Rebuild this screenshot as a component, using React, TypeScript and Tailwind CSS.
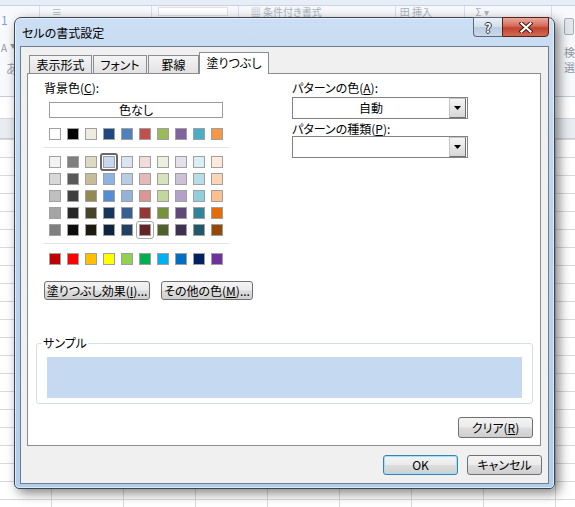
import React from 'react';

const theme = ['#FFFFFF', '#000000', '#EEECE1', '#1F497D', '#4F81BD', '#C0504D', '#9BBB59', '#8064A2', '#4BACC6', '#F79646'];
const tints = [
  ['#F2F2F2', '#7F7F7F', '#DDD9C3', '#C6D9F0', '#DBE5F1', '#F2DCDB', '#EBF1DD', '#E5E0EC', '#DBEEF3', '#FDEADA'],
  ['#D8D8D8', '#595959', '#C4BD97', '#8DB3E2', '#B8CCE4', '#E5B9B7', '#D7E3BC', '#CCC1D9', '#B7DDE8', '#FBD5B5'],
  ['#BFBFBF', '#3F3F3F', '#938953', '#548DD4', '#95B3D7', '#D99694', '#C3D69B', '#B2A2C7', '#92CDDC', '#FAC08F'],
  ['#A5A5A5', '#262626', '#494429', '#17365D', '#366092', '#953734', '#76923C', '#5F497A', '#31859B', '#E36C09'],
  ['#7F7F7F', '#0C0C0C', '#1D1B10', '#0F243E', '#244061', '#632423', '#4F6128', '#3F3151', '#205867', '#974806'],
];
const standard = ['#C00000', '#FF0000', '#FFC000', '#FFFF00', '#92D050', '#00B050', '#00B0F0', '#0070C0', '#002060', '#7030A0'];

const btn =
  'flex items-center justify-center rounded-[3px] border text-[12px] leading-none text-black bg-[linear-gradient(180deg,#f3f3f3_0%,#ebebeb_48%,#dcdcdc_52%,#cfcfcf_100%)]';

type SwatchState = 'selected' | 'hover' | undefined;

function Swatch({ color, state }: { color: string; state?: SwatchState }) {
  return (
    <span className="relative block h-3 w-3 border border-[#a0a0a0]" style={{ backgroundColor: color }}>
      {state === 'selected' && (
        <span className="absolute -inset-[4px] rounded-[3px] border-2 border-[#686868]" />
      )}
      {state === 'hover' && (
        <span className="absolute -inset-[4px] rounded-[3px] border border-[#a8a8a8]" />
      )}
    </span>
  );
}

function SwatchRow({ colors, marks = {} }: { colors: string[]; marks?: Record<number, SwatchState> }) {
  return (
    <div className="flex gap-[6px]">
      {colors.map((c, i) => (
        <Swatch key={i} color={c} state={marks[i]} />
      ))}
    </div>
  );
}

function DropArrow() {
  return (
    <div className="flex h-[20px] w-[17px] items-center justify-center border border-[#c4c4c4] border-b-[#6f6f6f] border-r-[#6f6f6f] bg-[linear-gradient(180deg,#f6f6f6,#d6d6d6)]">
      <svg width="7" height="4" viewBox="0 0 7 4">
        <polygon points="0,0 7,0 3.5,4" fill="#000" />
      </svg>
    </div>
  );
}

function Select({ value }: { value?: string }) {
  return (
    <div className="flex h-[22px] w-[176px] items-center border border-[#828282] bg-white pr-px">
      <div className="flex-1 text-center text-[12px] leading-none">{value}</div>
      <DropArrow />
    </div>
  );
}

function Background() {
  return (
    <div className="flex h-full flex-col">
      <div className="h-[6px] border-b border-[#c9d3df] bg-[#e6edf6]" />
      <div className="flex h-[91px] border-b border-[#c5cdd8] bg-[#f7f9fc] text-[10px] leading-[10px] text-[#aab4c0]">
        <div className="w-[40px] border-r border-[#d9dfe7] pl-px leading-none">
          <div className="mt-[8px] text-[12px] text-[#7fa3cf]">1</div>
          <div className="mt-[17px] flex items-start text-[10px] text-[#8d98a5]">
            A<span className="ml-[3px] text-[6px]">▼</span>
          </div>
          <div className="mt-[8px] pl-[5px] text-[13px] text-[#9aa4b0]">あ</div>
        </div>
        <div className="w-[113px] border-r border-[#d9dfe7] pl-[12px] pt-[1px]">≡</div>
        <div className="w-[87px] border-r border-[#d9dfe7] pl-[6px] pt-[1px]">
          <div className="h-[9px] w-[70px] border border-[#dde2e8] bg-white" />
        </div>
        <div className="w-[158px] border-r border-[#d9dfe7] pl-[12px] pt-px">▦ 条件付き書式</div>
        <div className="w-[70px] border-r border-[#d9dfe7] pl-[4px] pt-px">田 挿入</div>
        <div className="w-[87px] border-r border-[#d9dfe7] pl-[10px] pt-px">Σ ▾</div>
        <div className="flex-1 pl-[12px] leading-none text-[#8e97a3]">
          <div className="mt-[12px] h-[17px] w-[10px] rounded-[2px] border border-[#a7afba] bg-[#e4e8ed]" />
          <div className="mt-[12px] text-[11px]">検</div>
          <div className="mt-[4px] text-[11px]">選</div>
        </div>
      </div>
      <div className="h-[22px] border-b border-[#d0d7e0] bg-white" />
      <div className="h-[20px] border-b border-[#c8cfd8] bg-[#e9edf2]" />
      <div className="flex-1 bg-white bg-[linear-gradient(to_right,#d9d9d9_1px,transparent_1px),linear-gradient(to_bottom,#d9d9d9_1px,transparent_1px)] bg-[size:72px_18px] bg-[position:51px_0px]" />
    </div>
  );
}

export default function App() {
  return (
    <div className="relative h-[507px] w-[575px] overflow-hidden bg-white font-['Noto_Sans_CJK_JP','Noto_Sans',sans-serif] text-[12px] text-black [font-feature-settings:'palt']">
      <Background />

      {/* dialog window */}
      <div className="absolute left-[14px] top-[17px] flex h-[472px] w-[541px] flex-col rounded-t-[7px] rounded-b-[5px] border border-[#3b4654] bg-[linear-gradient(180deg,#cbdef3_0%,#bdd4ee_40%,#b3cdea_100%)] shadow-[inset_0_0_0_1px_rgba(255,255,255,0.55),4px_4px_12px_rgba(0,0,0,0.5)]">
        {/* title bar */}
        <div className="flex h-[28px] items-start">
          <div className="pl-[7px] pt-[8px] text-[12px] leading-[14px] text-black">セルの書式設定</div>
          <div className="ml-auto mr-[5px] -mt-px flex h-[20px]">
            <div className="flex w-[29px] items-center justify-center rounded-bl-[4px] border border-r-0 border-[#5c6b7c] bg-[linear-gradient(180deg,#eaf0f7_0%,#d3dfeb_48%,#bccde0_52%,#c9d8e8_100%)] text-[13px] font-bold leading-none text-white [text-shadow:1px_0_#263445,-1px_0_#263445,0_1px_#263445,0_-1px_#263445]">
              ?
            </div>
            <div className="flex w-[47px] items-center justify-center rounded-br-[4px] border border-[#5a1f17] bg-[linear-gradient(180deg,#e9aa9f_0%,#d46a58_45%,#c1432f_55%,#d26a52_100%)]">
              <svg width="14" height="11" viewBox="0 0 14 11">
                <path d="M2.5 1.5 L11.5 9.5 M11.5 1.5 L2.5 9.5" stroke="#3a1410" strokeWidth="4" strokeLinecap="square" />
                <path d="M2.5 1.5 L11.5 9.5 M11.5 1.5 L2.5 9.5" stroke="#fff" strokeWidth="2.2" strokeLinecap="square" />
              </svg>
            </div>
          </div>
        </div>

        {/* client area */}
        <div className="mx-[5px] mb-[4px] flex flex-1 flex-col border border-[#6d7d8f] bg-[#f0f0f0] pt-[5px]">
          {/* tabs */}
          <div className="ml-[6px] mr-[7px] flex h-[21px] items-end pl-[2px]">
            <div className="flex h-[18px] w-[63px] items-center justify-center border border-b-0 border-[#898c95] bg-[linear-gradient(180deg,#f4f4f4,#e2e2e2)] leading-none">
              表示形式
            </div>
            <div className="ml-px flex h-[18px] w-[54px] items-center justify-center border border-b-0 border-[#898c95] bg-[linear-gradient(180deg,#f4f4f4,#e2e2e2)] leading-none">
              フォント
            </div>
            <div className="ml-px flex h-[18px] w-[51px] items-center justify-center border border-b-0 border-[#898c95] bg-[linear-gradient(180deg,#f4f4f4,#e2e2e2)] leading-none">
              罫線
            </div>
            <div className="relative z-10 -mb-px flex h-[22px] w-[70px] items-start justify-center border border-b-0 border-[#898c95] bg-white pt-[4px] leading-none">
              塗りつぶし
            </div>
          </div>

          {/* panel */}
          <div className="ml-[6px] mr-[7px] flex h-[373px] flex-col border border-[#898c95] bg-white">
            <div className="flex">
              {/* background colour */}
              <div className="ml-[16px] flex w-[185px] flex-col">
                <div className="mt-[7px] h-[14px] leading-[14px]">
                  背景色(<span className="underline underline-offset-[1px]">C</span>):
                </div>
                <div className="ml-[5px] mt-[7px] flex h-[16px] w-[174px] items-center justify-center border border-[#9a9a9a] leading-none">
                  色なし
                </div>
                <div className="ml-[5px] mt-[10px]">
                  <SwatchRow colors={theme} />
                </div>
                <div className="mt-[7px] h-px w-[185px] bg-[#e2e2e2]" />
                <div className="ml-[5px] mt-[8px] flex flex-col gap-[5px]">
                  {tints.map((row, r) => (
                    <SwatchRow
                      key={r}
                      colors={row}
                      marks={r === 0 ? { 3: 'selected' } : r === 4 ? { 5: 'hover' } : {}}
                    />
                  ))}
                </div>
                <div className="mt-[7px] h-px w-[185px] bg-[#e2e2e2]" />
                <div className="ml-[5px] mt-[9px]">
                  <SwatchRow colors={standard} />
                </div>
                <div className="mt-[16px] flex gap-[11px]">
                  <button className={`${btn} h-[19px] w-[106px] shrink-0 border-[#707070]`}>
                    塗りつぶし効果(<span className="underline underline-offset-[1px]">I</span>)...
                  </button>
                  <button className={`${btn} h-[19px] w-[92px] shrink-0 border-[#707070]`}>
                    その他の色(<span className="underline underline-offset-[1px]">M</span>)...
                  </button>
                </div>
              </div>

              {/* pattern */}
              <div className="ml-[63px] flex flex-col">
                <div className="mt-[7px] h-[14px] leading-[14px]">
                  パターンの色(<span className="underline underline-offset-[1px]">A</span>):
                </div>
                <div className="mt-[2px]">
                  <Select value="自動" />
                </div>
                <div className="mt-[3px] h-[14px] leading-[14px]">
                  パターンの種類(<span className="underline underline-offset-[1px]">P</span>):
                </div>
                <Select />
              </div>
            </div>

            {/* sample */}
            <div className="relative ml-[8px] mr-[7px] mt-[43px] h-[61px] rounded-[3px] border border-[#d5dfe5]">
              <span className="absolute -top-[8px] left-[5px] bg-white px-px leading-[14px]">サンプル</span>
              <div className="mx-[10px] mt-[13px] h-[41px] bg-[#C5D9F1]" />
            </div>

            <div className="mr-[7px] mt-[13px] flex justify-end">
              <button className={`${btn} h-[21px] w-[75px] border-[#707070]`}>
                クリア(<span className="underline underline-offset-[1px]">R</span>)
              </button>
            </div>
          </div>

          {/* dialog buttons */}
          <div className="mr-[6px] mt-[9px] flex justify-end gap-[9px]">
            <button className={`${btn} h-[20px] w-[75px] border-[#3c7fb1] shadow-[inset_0_0_0_1px_#9fe3fa]`}>OK</button>
            <button className={`${btn} h-[20px] w-[75px] border-[#707070]`}>キャンセル</button>
          </div>
        </div>
      </div>
    </div>
  );
}
